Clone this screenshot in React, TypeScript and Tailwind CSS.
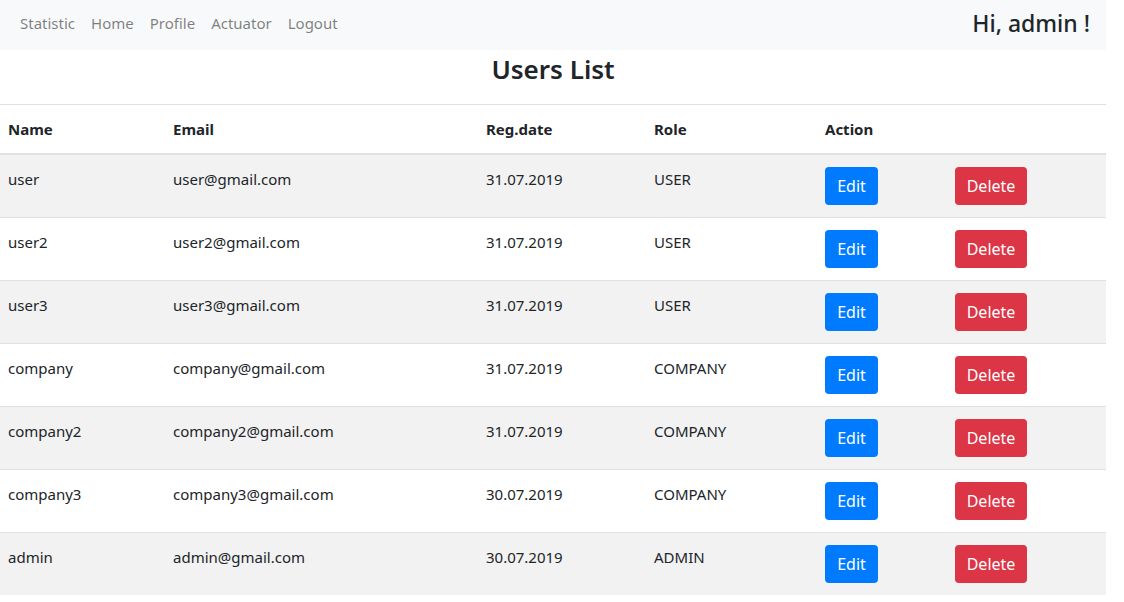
import React from "react";

const users = [
  ["user", "user@gmail.com", "31.07.2019", "USER"],
  ["user2", "user2@gmail.com", "31.07.2019", "USER"],
  ["user3", "user3@gmail.com", "31.07.2019", "USER"],
  ["company", "company@gmail.com", "31.07.2019", "COMPANY"],
  ["company2", "company2@gmail.com", "31.07.2019", "COMPANY"],
  ["company3", "company3@gmail.com", "30.07.2019", "COMPANY"],
  ["admin", "admin@gmail.com", "30.07.2019", "ADMIN"],
];

export default function App() {
  return (
    <div
      className="w-[1106px] bg-white text-[#212529] text-[15px]"
      style={{ fontFamily: '"Noto Sans", "Open Sans", sans-serif' }}
    >
      <nav className="h-[50px] bg-[#f8f9fa] flex items-center justify-between pl-3 pr-4">
        <div className="flex items-center">
          {["Statistic", "Home", "Profile", "Actuator", "Logout"].map((l) => (
            <a key={l} className="px-2 text-[rgba(0,0,0,0.5)] leading-6 mb-[5px]">
              {l}
            </a>
          ))}
        </div>
        <div className="text-[23px] font-medium leading-7 mb-[5px]">Hi, admin !</div>
      </nav>
      <h3 className="text-[26px] font-semibold text-center leading-[34px] pt-[2px] pb-[18px]">
        Users List
      </h3>
      <table className="w-[1106px] table-fixed border-collapse">
        <colgroup>
          <col className="w-[165px]" />
          <col className="w-[313px]" />
          <col className="w-[168px]" />
          <col className="w-[171px]" />
          <col className="w-[130px]" />
          <col className="w-[159px]" />
        </colgroup>
        <thead>
          <tr className="border-t border-[#dee2e6] border-b-2">
            {["Name", "Email", "Reg.date", "Role", "Action", ""].map((h, i) => (
              <th key={i} className="text-left font-bold px-2 pt-[12px] pb-[12px] leading-6 align-bottom">
                {h}
              </th>
            ))}
          </tr>
        </thead>
        <tbody>
          {users.map((u, idx) => (
            <tr
              key={idx}
              className={(idx % 2 === 0 ? "bg-[#f2f2f2] " : "bg-white ") + "border-t border-[#dee2e6]"}
            >
              {u.map((c, j) => (
                <td key={j} className="px-2 py-3 align-top leading-6 pt-[12px]">
                  {c}
                </td>
              ))}
              <td className="px-2 py-3 align-top">
                <button className="h-[38px] w-[53px] rounded bg-[#007bff] text-white text-[16px] leading-6">
                  Edit
                </button>
              </td>
              <td className="px-2 py-3 align-top">
                <button className="h-[38px] w-[72px] rounded bg-[#dc3545] text-white text-[16px] leading-6">
                  Delete
                </button>
              </td>
            </tr>
          ))}
        </tbody>
      </table>
    </div>
  );
}
